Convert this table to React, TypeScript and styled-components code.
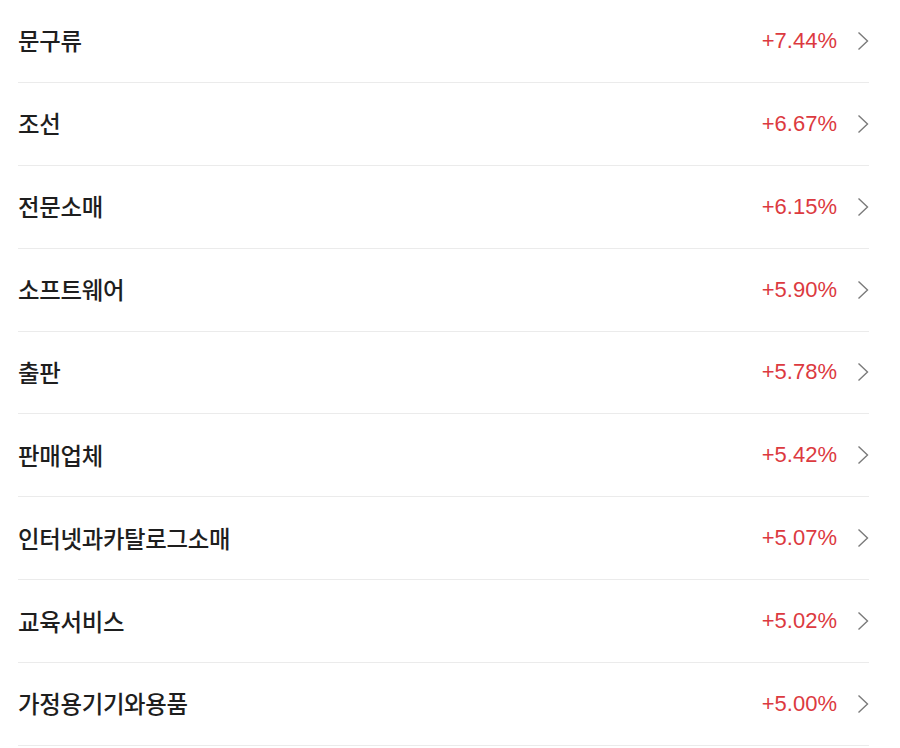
import React from "react";
import styled, { createGlobalStyle } from "styled-components";

const Global = createGlobalStyle`
  html, body { margin: 0; padding: 0; background: #fff; }
  body { font-family: "Noto Sans CJK KR", "Noto Sans", sans-serif; }
`;

const List = styled.ul`
  list-style: none;
  margin: 0;
  padding: 0 31px 0 18px;
`;

const Row = styled.li`
  box-sizing: border-box;
  height: 82.875px;
  display: flex;
  align-items: center;
  border-bottom: 1px solid #ebebeb;
`;

const Name = styled.span`
  flex: 1;
  font-family: "Noto Sans CJK KR", sans-serif;
  font-size: 23.4px;
  font-weight: 500;
  color: #1e1e1e;
  letter-spacing: -0.3px;
  padding-bottom: 1px;
`;

const Rate = styled.span`
  font-family: "Liberation Sans", Arial, sans-serif;
  font-size: 22px;
  color: #dc3a3f;
  letter-spacing: 0;
`;

const Chevron = styled.svg`
  width: 12px;
  height: 20px;
  margin-left: 20px;
  flex: none;
`;

const data: [string, string][] = [
  ["문구류", "+7.44%"],
  ["조선", "+6.67%"],
  ["전문소매", "+6.15%"],
  ["소프트웨어", "+5.90%"],
  ["출판", "+5.78%"],
  ["판매업체", "+5.42%"],
  ["인터넷과카탈로그소매", "+5.07%"],
  ["교육서비스", "+5.02%"],
  ["가정용기기와용품", "+5.00%"],
];

export default function App() {
  return (
    <>
      <Global />
      <List>
        {data.map(([n, r]) => (
          <Row key={n}>
            <Name>{n}</Name>
            <Rate>{r}</Rate>
            <Chevron viewBox="0 0 12 20">
              <path d="M1.5 1.5 L10.5 10 L1.5 18.5" fill="none" stroke="#7a7a7a" strokeWidth="1.4" />
            </Chevron>
          </Row>
        ))}
      </List>
    </>
  );
}
